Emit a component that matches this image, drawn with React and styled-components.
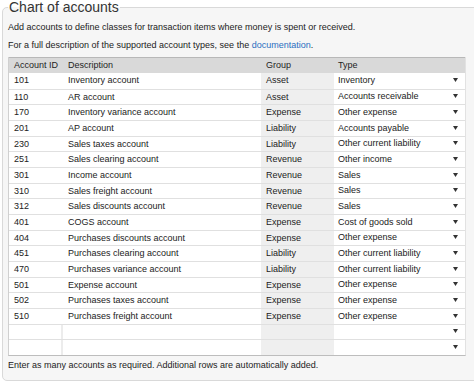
import React from 'react';
import styled, { createGlobalStyle } from 'styled-components';

const GlobalStyle = createGlobalStyle`
  html, body {
    margin: 0;
    padding: 0;
    background: #fff;
    overflow: hidden;
  }
  body {
    font-family: "Liberation Sans", Arial, sans-serif;
    color: #222;
  }
`;

const Panel = styled.fieldset`
  margin: 0 0 0 2px;
  padding: 0 5px 9px 5px;
  width: 480px;
  box-sizing: border-box;
  border: 1px solid #d9d9d9;
  border-radius: 5px;
  background: #f6f6f6;
`;

const Legend = styled.legend`
  padding: 0 1px;
  font-size: 14px;
  line-height: 14px;
  color: #333;
`;

const Note = styled.p`
  margin: ${(p) => p.$top}px 0 0;
  font-size: 9px;
  line-height: 11px;
  color: #222;

  a {
    color: #2a6ec0;
    text-decoration: none;
  }
`;

const Table = styled.div`
  margin-top: 6px;
  width: 456px;
  border-left: 1px solid #d0d0d0;
  border-right: 1px solid #e2e2e2;
  border-bottom: 1px solid #bdbdbd;
  background: #fff;
  font-size: 9px;
`;

const cols = '54px 198px 73px 1fr';

const HeadRow = styled.div`
  display: grid;
  grid-template-columns: ${cols};
  height: 16px;
  box-sizing: border-box;
  border-top: 1px solid #b8b8b8;
  background: #d9d9d9;
  line-height: 15px;
  color: #1e1e1e;
`;

const HeadCell = styled.div`
  padding-left: ${(p) => p.$pad ?? 5}px;
`;

const Row = styled.div`
  display: grid;
  grid-template-columns: ${cols};
  height: 15.67px;
  box-sizing: border-box;
  border-top: ${(p) => (p.$first ? 'none' : '1px solid #e0e0e0')};
  line-height: 15px;
`;

const Cell = styled.div`
  padding-left: ${(p) => p.$pad ?? 5}px;
  white-space: nowrap;
  overflow: hidden;
  color: #222;
  background: ${(p) => (p.$readonly ? '#efefef' : '#fff')};
  border-right: ${(p) => (p.$divider ? '2px solid #ececec' : 'none')};
`;

const TypeCell = styled(Cell)`
  display: flex;
  align-items: center;
  justify-content: space-between;
  padding-right: 7px;
`;

const Arrow = () => (
  <svg width="5" height="4" viewBox="0 0 5 4" style={{ marginTop: -1 }}>
    <polygon points="0,0 5,0 2.5,4" fill="#333" />
  </svg>
);

const accounts = [
  ['101', 'Inventory account', 'Asset', 'Inventory'],
  ['110', 'AR account', 'Asset', 'Accounts receivable'],
  ['170', 'Inventory variance account', 'Expense', 'Other expense'],
  ['201', 'AP account', 'Liability', 'Accounts payable'],
  ['230', 'Sales taxes account', 'Liability', 'Other current liability'],
  ['251', 'Sales clearing account', 'Revenue', 'Other income'],
  ['301', 'Income account', 'Revenue', 'Sales'],
  ['310', 'Sales freight account', 'Revenue', 'Sales'],
  ['312', 'Sales discounts account', 'Revenue', 'Sales'],
  ['401', 'COGS account', 'Expense', 'Cost of goods sold'],
  ['404', 'Purchases discounts account', 'Expense', 'Other expense'],
  ['451', 'Purchases clearing account', 'Liability', 'Other current liability'],
  ['470', 'Purchases variance account', 'Liability', 'Other current liability'],
  ['501', 'Expense account', 'Expense', 'Other expense'],
  ['502', 'Purchases taxes account', 'Expense', 'Other expense'],
  ['510', 'Purchases freight account', 'Expense', 'Other expense'],
  ['', '', '', ''],
  ['', '', '', ''],
];

export default function App() {
  return (
    <>
      <GlobalStyle />
      <Panel>
        <Legend>Chart of accounts</Legend>
        <Note $top={8}>
          Add accounts to define classes for transaction items where money is spent or received.
        </Note>
        <Note $top={7}>
          For a full description of the supported account types, see the <a href="#docs">documentation</a>.
        </Note>
        <Table>
          <HeadRow>
            <HeadCell>Account ID</HeadCell>
            <HeadCell>Description</HeadCell>
            <HeadCell>Group</HeadCell>
            <HeadCell $pad={4}>Type</HeadCell>
          </HeadRow>
          {accounts.map(([id, desc, group, type], i) => {
            const empty = !id;
            return (
              <Row key={i} $first={i === 0}>
                <Cell $divider={empty}>{id}</Cell>
                <Cell>{desc}</Cell>
                <Cell $readonly>{group}</Cell>
                <TypeCell $pad={4}>
                  <span>{type}</span>
                  <Arrow />
                </TypeCell>
              </Row>
            );
          })}
        </Table>
        <Note $top={4}>
          Enter as many accounts as required. Additional rows are automatically added.
        </Note>
      </Panel>
    </>
  );
}
